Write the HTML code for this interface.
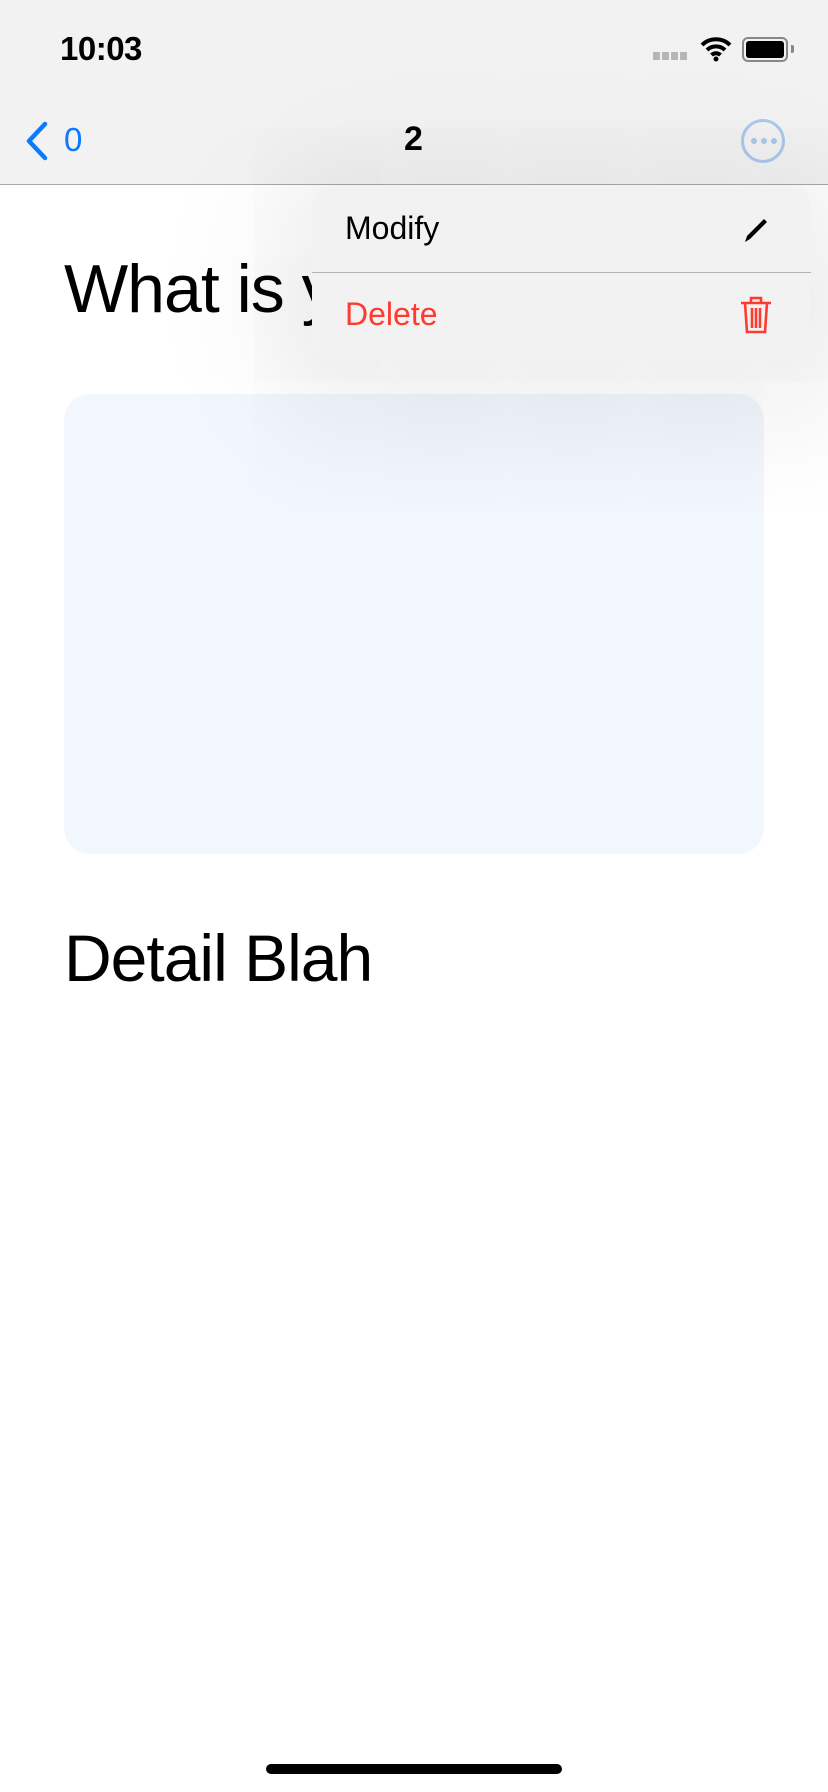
<!DOCTYPE html>
<html><head><meta charset="utf-8"><style>
body{margin:0;width:828px;height:1792px;position:relative;overflow:hidden;background:#fff;font-family:"Liberation Sans",sans-serif;}
.nav{position:absolute;left:0;top:0;width:828px;height:184px;background:#f2f2f2;border-bottom:1px solid #a8a8a8;}
.abs{position:absolute;}
</style></head><body>
<div class="nav"></div>
<div class="abs" style="left:60px;top:30px;font-size:33px;font-weight:600;letter-spacing:-0.5px;">10:03</div>
<div class="abs" style="left:653px;top:52px;width:7px;height:8px;background:#b5b5b5;border-radius:1px;box-shadow:9px 0 #b5b5b5,18px 0 #b5b5b5,27px 0 #b5b5b5"></div>
<svg class="abs" style="left:700px;top:36px" width="32" height="26" viewBox="0 0 32 26"><path d="M2 9a20 20 0 0 1 28 0M7 14a13 13 0 0 1 18 0M11.5 19a6.5 6.5 0 0 1 9 0" stroke="#000" stroke-width="4" fill="none"/><circle cx="16" cy="23" r="2.5"/></svg>
<div class="abs" style="left:742px;top:37px;width:42px;height:21px;border:2px solid #888;border-radius:6px;"></div>
<div class="abs" style="left:746px;top:41px;width:38px;height:17px;background:#000;border-radius:3px;"></div>
<div class="abs" style="left:791px;top:45px;width:3px;height:8px;background:#888;border-radius:0 2px 2px 0"></div>
<svg class="abs" style="left:24px;top:121px" width="26" height="40" viewBox="0 0 26 40"><path d="M21 3L5 20l16 17" stroke="#0a7aff" stroke-width="4.5" fill="none" stroke-linecap="round" stroke-linejoin="round"/></svg>
<div class="abs" style="left:64px;top:121px;font-size:33px;color:#0a7aff;">0</div>
<div class="abs" style="left:404px;top:120px;font-size:34px;font-weight:700;">2</div>
<div class="abs" style="left:741px;top:119px;width:38px;height:38px;border:3px solid #aac8ec;border-radius:50%;"></div>
<div class="abs" style="left:751px;top:138px;width:6px;height:6px;border-radius:50%;background:#aac8ec;box-shadow:10px 0 #aac8ec,20px 0 #aac8ec"></div>
<div class="abs" style="left:64px;top:250px;font-size:68px;letter-spacing:-1px;">What is y</div>
<div class="abs" style="left:64px;top:394px;width:700px;height:460px;background:#f2f6fd;border-radius:26px;"></div>
<div class="abs" style="left:64px;top:920px;font-size:66px;letter-spacing:-1px;">Detail Blah</div>
<div class="abs" style="left:312px;top:185px;width:499px;height:175px;background:#f2f2f2;border-radius:22px;box-shadow:0 20px 180px 40px rgba(0,0,0,0.09);"></div>
<div class="abs" style="left:312px;top:272px;width:499px;height:1px;background:#b4b4b4;"></div>
<div class="abs" style="left:345px;top:210px;font-size:32px;">Modify</div>
<div class="abs" style="left:345px;top:296px;font-size:32px;color:#ff3b30;">Delete</div>
<svg class="abs" style="left:740px;top:214px" width="32" height="32" viewBox="0 0 32 32"><path d="M5 28l2-6L24 5l3 3L10 25z" fill="#000"/></svg>
<svg class="abs" style="left:738px;top:295px" width="36" height="40" viewBox="0 0 36 40"><path d="M3 8h30M13 8V3h10v5M7 8l2 29h18l2-29M14 13v20M18 13v20M22 13v20" stroke="#ff3b30" stroke-width="2.6" fill="none"/></svg>
<div class="abs" style="left:266px;top:1764px;width:296px;height:10px;background:#000;border-radius:5px;"></div>
</body></html>
